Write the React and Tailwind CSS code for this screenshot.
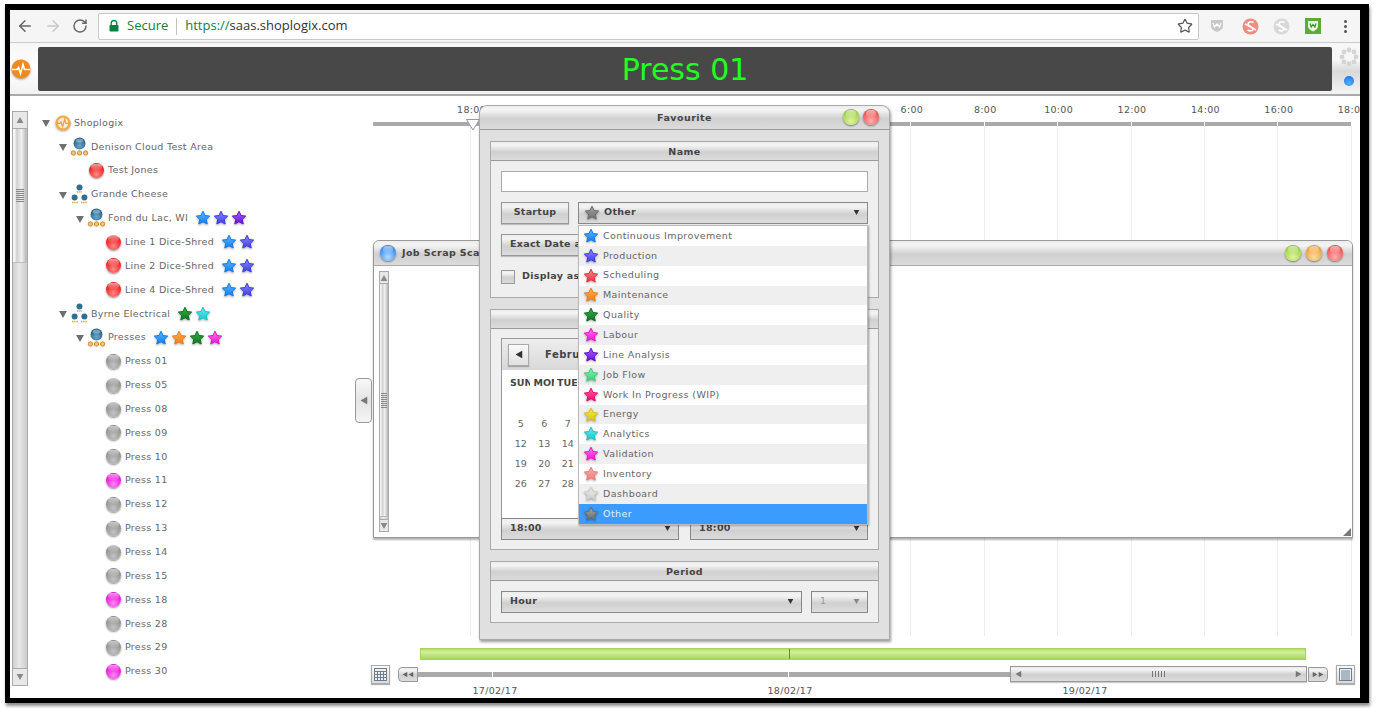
import React, { useId } from 'react';
import { ArrowLeft, ArrowRight, RotateCw, Star as StarOutline } from 'lucide-react';

const GLOSS = 'bg-[linear-gradient(180deg,#ececec_0%,#f4f4f4_18%,#d0d0d0_55%,#dcdcdc_100%)]';
const FONT = "font-['DejaVu_Sans',sans-serif]";

const STAR_COLORS = {
  blue: ['#62b8ff', '#0f7cf0'],
  indigo: ['#8c8cff', '#3c3ce6'],
  red: ['#ff8a92', '#ee3040'],
  orange: ['#ffb866', '#f57a0a'],
  green: ['#3fae4e', '#0f7322'],
  magenta: ['#ff7cf0', '#f010d0'],
  purple: ['#a866ff', '#6610d8'],
  mint: ['#90f0b8', '#34d078'],
  pink: ['#ff66a8', '#f00a70'],
  yellow: ['#f5ec66', '#d6c40a'],
  teal: ['#70ecec', '#10c8cc'],
  salmon: ['#ffb0b0', '#f47a7a'],
  silver: ['#eeeeee', '#cccccc'],
  gray: ['#a8a8a8', '#6c6c6c'],
};

const Star = ({ color, size = 16 }) => {
  const id = useId();
  const [top, bottom] = STAR_COLORS[color];
  return (
    <svg width={size} height={size} viewBox="0 0 16 16" className="shrink-0 drop-shadow-[0_1px_1px_rgba(0,0,0,0.35)]">
      <defs>
        <linearGradient id={id} x1="0" y1="0" x2="0" y2="1">
          <stop offset="0" stopColor={top} />
          <stop offset="1" stopColor={bottom} />
        </linearGradient>
      </defs>
      <path
        d="M8 1.200l2 4.300 4.700.6-3.400 3.200.9 4.700L8 11.700l-4.200 2.300.9-4.700L1.300 6.100 6 5.500z"
        fill={`url(#${id})`}
        stroke={bottom}
        strokeWidth="1"
        strokeLinejoin="round"
      />
    </svg>
  );
};

const ORBS = {
  red: 'bg-[radial-gradient(circle_at_50%_75%,#ff8a8a_0%,#f42c2c_55%,#c81818_100%)]',
  gray: 'bg-[radial-gradient(circle_at_50%_75%,#c4c4c4_0%,#999999_55%,#777777_100%)]',
  magenta: 'bg-[radial-gradient(circle_at_50%_75%,#ff8af4_0%,#f422e0_55%,#c010b0_100%)]',
  blue: 'bg-[radial-gradient(circle_at_50%_75%,#b8dcff_0%,#4f9cf0_55%,#1c66c0_100%)]',
  lime: 'bg-[radial-gradient(circle_at_50%_75%,#e0f5a0_0%,#a8d850_60%,#7aa828_100%)]',
  amber: 'bg-[radial-gradient(circle_at_50%_75%,#ffdca0_0%,#f0a848_60%,#c88020_100%)]',
  rose: 'bg-[radial-gradient(circle_at_50%_75%,#ffb0b0_0%,#f06060_60%,#c83838_100%)]',
};

const Orb = ({ color, size = 'w-[15px] h-[15px]' }) => (
  <span className={`relative block shrink-0 rounded-full shadow-[0_1px_2px_rgba(0,0,0,0.45)] ${size} ${ORBS[color]}`}>
    <span className="absolute left-[16%] right-[16%] top-[5%] h-[42%] rounded-full bg-linear-to-b from-white/55 to-white/5" />
  </span>
);

const NodeIcon = () => (
  <svg width="19" height="20" viewBox="0 0 19 20">
    <defs>
      <radialGradient id="node-orb" cx="50%" cy="70%" r="65%">
        <stop offset="0" stopColor="#6aa8c8" />
        <stop offset="1" stopColor="#1f5f86" />
      </radialGradient>
    </defs>
    <circle cx="9.5" cy="6.5" r="6" fill="url(#node-orb)" />
    <ellipse cx="9.5" cy="3.6" rx="3.6" ry="2" fill="#fff" fillOpacity="0.35" />
    <circle cx="3.4" cy="16" r="2.2" fill="#f3c27c" stroke="#d98a24" strokeWidth="1" />
    <circle cx="9.5" cy="16" r="2.2" fill="#f3c27c" stroke="#d98a24" strokeWidth="1" />
    <circle cx="15.6" cy="16" r="2.2" fill="#f3c27c" stroke="#d98a24" strokeWidth="1" />
  </svg>
);

const OrgIcon = () => (
  <svg width="19" height="21" viewBox="0 0 19 21">
    <circle cx="9.5" cy="3.4" r="3" fill="#2f6f96" />
    <path d="M7 8h5M2 18.500h6M11 18.500h6" stroke="#e89a3c" strokeWidth="1.6" strokeDasharray="1.4 .8" />
    <circle cx="4.6" cy="13.500" r="3" fill="#2f6f96" />
    <circle cx="14.4" cy="13.500" r="3" fill="#2f6f96" />
  </svg>
);

const LogoIcon = ({ size = 16, ring = false }) => (
  <svg width={size} height={size} viewBox="0 0 20 20" className="drop-shadow-[0_1px_1px_rgba(0,0,0,0.35)]">
    <circle cx="10" cy="10" r="9.5" fill={ring ? '#f6a94e' : '#f08a1c'} />
    {ring && <circle cx="10" cy="10" r="6.5" fill="#fdeeda" />}
    <path d="M1 10.500h5l1.500-2 2 6 2.500-9 1.500 5h6" fill="none" stroke={ring ? '#f0a040' : '#fff'} strokeWidth="1.6" />
  </svg>
);

const Caret = ({ className = 'text-[#6f6f6f]', w = 9, h = 8 }) => (
  <svg width={w} height={h} viewBox="0 0 9 8" className={`shrink-0 ${className}`}>
    <path d="M0 0h9L4.500 8z" fill="currentColor" />
  </svg>
);

const TREE = [
  { level: 0, label: 'Shoplogix', icon: 'logo', open: true },
  { level: 1, label: 'Denison Cloud Test Area', icon: 'node', open: true },
  { level: 2, label: 'Test Jones', orb: 'red' },
  { level: 1, label: 'Grande Cheese', icon: 'org', open: true },
  { level: 2, label: 'Fond du Lac, WI', icon: 'node', open: true, stars: ['blue', 'indigo', 'purple'] },
  { level: 3, label: 'Line 1 Dice-Shred', orb: 'red', stars: ['blue', 'indigo'] },
  { level: 3, label: 'Line 2 Dice-Shred', orb: 'red', stars: ['blue', 'indigo'] },
  { level: 3, label: 'Line 4 Dice-Shred', orb: 'red', stars: ['blue', 'indigo'] },
  { level: 1, label: 'Byrne Electrical', icon: 'org', open: true, stars: ['green', 'teal'] },
  { level: 2, label: 'Presses', icon: 'node', open: true, stars: ['blue', 'orange', 'green', 'magenta'] },
  { level: 3, label: 'Press 01', orb: 'gray' },
  { level: 3, label: 'Press 05', orb: 'gray' },
  { level: 3, label: 'Press 08', orb: 'gray' },
  { level: 3, label: 'Press 09', orb: 'gray' },
  { level: 3, label: 'Press 10', orb: 'gray' },
  { level: 3, label: 'Press 11', orb: 'magenta' },
  { level: 3, label: 'Press 12', orb: 'gray' },
  { level: 3, label: 'Press 13', orb: 'gray' },
  { level: 3, label: 'Press 14', orb: 'gray' },
  { level: 3, label: 'Press 15', orb: 'gray' },
  { level: 3, label: 'Press 18', orb: 'magenta' },
  { level: 3, label: 'Press 28', orb: 'gray' },
  { level: 3, label: 'Press 29', orb: 'gray' },
  { level: 3, label: 'Press 30', orb: 'magenta' },
];

const FAVOURITES = [
  ['Continuous Improvement', 'blue'],
  ['Production', 'indigo'],
  ['Scheduling', 'red'],
  ['Maintenance', 'orange'],
  ['Quality', 'green'],
  ['Labour', 'magenta'],
  ['Line Analysis', 'purple'],
  ['Job Flow', 'mint'],
  ['Work In Progress (WIP)', 'pink'],
  ['Energy', 'yellow'],
  ['Analytics', 'teal'],
  ['Validation', 'magenta'],
  ['Inventory', 'salmon'],
  ['Dashboard', 'silver'],
];

const HOURS = ['18:00', '20:00', '22:00', '0:00', '2:00', '4:00', '6:00', '8:00', '10:00', '12:00', '14:00', '16:00', '18:00'];

const TreeRow = ({ level, label, icon, orb, open, stars }) => {
  const indent = ['pl-0', 'pl-[17px]', 'pl-[34px]', 'pl-[51px]'][level];
  return (
    <div className={`flex h-[23.85px] items-center ${indent}`}>
      <span className="flex w-[11px] shrink-0 justify-start pt-[2px]">{open && <Caret w={8} h={7} />}</span>
      <span className="flex w-[19px] shrink-0 justify-center">
        {icon === 'logo' && <LogoIcon ring />}
        {icon === 'node' && <NodeIcon />}
        {icon === 'org' && <OrgIcon />}
        {orb && <Orb color={orb} />}
      </span>
      <span className="ml-[2px] whitespace-nowrap text-[9.5px] tracking-[0.3px] text-[#666]">{label}</span>
      {stars && (
        <span className="ml-[7px] flex gap-[2px]">
          {stars.map((s, i) => (
            <Star key={i} color={s} />
          ))}
        </span>
      )}
    </div>
  );
};

const VScroll = ({ thumb, grip, width, arrow }) => (
  <div className={`flex h-full shrink-0 flex-col border border-[#aaa] bg-[linear-gradient(90deg,#d0d0d0,#e8e8e8_45%,#cccccc)] ${width}`}>
    <div className={`flex shrink-0 items-center justify-center border-b border-[#aaa] bg-[#e8e8e8] ${arrow}`}>
      <Caret className="rotate-180 text-[#888]" w={8} h={6} />
    </div>
    <div className={`flex shrink-0 items-center justify-center border-b border-[#bbb] bg-[linear-gradient(90deg,#f4f4f4_12%,#cfcfcf_28%,#f2f2f2_60%,#bdbdbd_92%)] ${thumb}`}>
      <span className={`block bg-[repeating-linear-gradient(180deg,#888_0,#888_1px,transparent_1px,transparent_2px)] ${grip}`} />
    </div>
    <div className="flex-1" />
    <div className={`flex shrink-0 items-center justify-center border-t border-[#aaa] bg-[#e8e8e8] ${arrow}`}>
      <Caret className="text-[#888]" w={8} h={6} />
    </div>
  </div>
);

const Btn = ({ children, className = '' }) => (
  <div className={`flex h-[22px] items-center whitespace-nowrap border border-[#999] pb-[1px] text-[9.5px] font-bold tracking-[0.3px] text-[#444] shadow-[0_1px_1px_rgba(0,0,0,0.2)] ${GLOSS} ${className}`}>
    {children}
  </div>
);

const Select = ({ children, className = '', pad = 'pl-[8px]', muted = false }) => (
  <div className={`flex h-[22px] items-center justify-between border border-[#888] pb-[1px] pr-[7px] text-[9.5px] font-bold tracking-[0.3px] text-[#444] ${pad} ${GLOSS} ${className}`}>
    <span className={`flex items-center gap-[4px] ${muted ? 'font-normal text-[#999]' : ''}`}>{children}</span>
    <Caret className={muted ? 'text-[#888]' : 'text-[#333]'} w={7} h={5} />
  </div>
);

const PanelHead = ({ children }) => (
  <div className={`flex h-[19px] shrink-0 items-center justify-center border-b border-[#999] pt-[2px] text-[9.5px] font-bold tracking-[0.4px] text-[#444] ${GLOSS}`}>
    {children}
  </div>
);

const Calendar = () => {
  const days = ['', '', '', 1, 2, 3, 4, 5, 6, 7, 8, 9, 10, 11, 12, 13, 14, 15, 16, 17, 18, 19, 20, 21, 22, 23, 24, 25, 26, 27, 28];
  return (
    <div className="border border-b-0 border-[#999] bg-white">
      <div className="flex h-[31px] items-center bg-[linear-gradient(180deg,#eeeeee,#d8d8d8)] px-[6px]">
        <div className="flex h-[22px] w-[21px] items-center justify-center border border-[#aaa] bg-[linear-gradient(180deg,#fafafa,#e0e0e0)] shadow-[0_1px_1px_rgba(0,0,0,0.25)]">
          <Caret className="rotate-90 text-[#333]" w={8} h={7} />
        </div>
        <span className="ml-[16px] text-[10px] font-bold tracking-[0.5px] text-[#444]">February 2017</span>
      </div>
      <div className="h-[148px] px-[7px] pt-[3px]">
        <div className="grid h-[20px] grid-cols-[repeat(7,23.5px)] items-center text-[9.5px] font-bold text-[#444]">
          {['SUN', 'MON', 'TUE', 'WED', 'THU', 'FRI', 'SAT'].map((d) => (
            <span key={d} className="ml-[1px] w-[20px] overflow-hidden">{d}</span>
          ))}
        </div>
        <div className="mt-[1px] grid grid-cols-[repeat(7,23.5px)] text-center text-[9.5px] leading-[20px] text-[#666]">
          {days.map((d, i) => (
            <span key={i} className="h-[20px]">{d}</span>
          ))}
        </div>
      </div>
    </div>
  );
};

const FavouriteDialog = () => (
  <div className="absolute left-[119px] top-[9px] z-20 flex h-[535px] w-[411px] flex-col rounded-t-[8px] border border-[#aaa] bg-[#e0e0e0] shadow-[1px_2px_3px_rgba(0,0,0,0.4)]">
    <div className={`relative flex h-[24px] shrink-0 items-center justify-center rounded-t-[8px] border-b border-[#999] pt-[2px] text-[9.5px] font-bold tracking-[0.45px] text-[#444] ${GLOSS}`}>
      Favourite
      <span className="absolute right-[10px] top-[3px] flex gap-[4px]">
        <Orb color="lime" size="w-[16px] h-[16px]" />
        <Orb color="rose" size="w-[16px] h-[16px]" />
      </span>
    </div>
    <div className="flex flex-col gap-[11px] px-[10px] pt-[11px]">
      <section className="flex h-[157px] flex-col border border-[#aaa] bg-[#efefef]">
        <PanelHead>Name</PanelHead>
        <div className="flex flex-col gap-[10px] px-[10px] pt-[10px]">
          <div className="h-[21px] border border-[#aaa] bg-white" />
          <div className="flex gap-[9px]">
            <Btn className="w-[68px] justify-center">Startup</Btn>
            <Select className="flex-1" pad="pl-[5px]">
              <Star color="gray" />
              Other
            </Select>
          </div>
          <Btn className="w-[130px] overflow-hidden pl-[8px]">Exact Date and Time</Btn>
          <div className="mt-[3px] flex items-center gap-[7px] text-[9.5px] font-bold tracking-[0.3px] text-[#444]">
            <span className={`h-[14px] w-[14px] border border-[#999] ${GLOSS}`} />
            <span className="pb-[1px]">Display as</span>
          </div>
        </div>
      </section>

      <section className="flex h-[241px] flex-col border border-[#aaa] bg-[#efefef]">
        <PanelHead />
        <div className="px-[10px] pt-[9px]">
          <Calendar />
          <div className="flex gap-[11px]">
            <Select className="w-[178px]">18:00</Select>
            <Select className="flex-1">18:00</Select>
          </div>
        </div>
      </section>

      <section className="flex h-[62px] flex-col border border-[#aaa] bg-[#efefef]">
        <PanelHead>Period</PanelHead>
        <div className="flex gap-[9px] px-[10px] pt-[10px]">
          <Select className="w-[301px]">Hour</Select>
          <Select className="flex-1" muted>1</Select>
        </div>
      </section>
    </div>

    <div className="absolute left-[98px] top-[119px] w-[290px] border border-[#bbb] bg-white shadow-[1px_1px_2px_rgba(0,0,0,0.35)]">
      {FAVOURITES.map(([label, color], i) => (
        <div key={label} className={`flex h-[19.85px] items-center gap-[4px] pl-[4px] text-[9.5px] tracking-[0.4px] text-[#666] ${i % 2 ? 'bg-[#efefef]' : 'bg-white'}`}>
          <Star color={color} />
          {label}
        </div>
      ))}
      <div className="flex h-[19.85px] items-center gap-[4px] bg-[#3b9bff] pl-[4px] text-[9.5px] tracking-[0.4px] text-[#e6f2ff]">
        <Star color="gray" />
        Other
      </div>
    </div>
  </div>
);

const ScrapWindow = () => (
  <div className="absolute left-0 top-[114px] flex h-[298px] w-[980px] flex-col rounded-t-[6px] border border-[#999] bg-white shadow-[0_2px_2px_rgba(0,0,0,0.3)]">
    <div className={`flex h-[25px] shrink-0 items-center justify-between rounded-t-[6px] border-b border-[#aaa] pl-[6px] pr-[9px] ${GLOSS}`}>
      <span className="flex items-center gap-[6px] text-[9.5px] font-bold tracking-[0.4px] text-[#444]">
        <Orb color="blue" size="w-[16px] h-[16px]" />
        Job Scrap Scatter
      </span>
      <span className="flex gap-[5px]">
        <Orb color="lime" size="w-[16px] h-[16px]" />
        <Orb color="amber" size="w-[16px] h-[16px]" />
        <Orb color="rose" size="w-[16px] h-[16px]" />
      </span>
    </div>
    <div className="relative flex-1 py-[5px] pl-[5px]">
      <VScroll width="w-[10px]" thumb="h-[233px]" grip="h-[15px] w-[6px]" arrow="h-[12px]" />
      <svg width="8" height="8" viewBox="0 0 8 8" className="absolute bottom-[1px] right-[1px]">
        <path d="M8 0v8H0z" fill="#777" />
      </svg>
    </div>
  </div>
);

const ToolIcon = ({ kind }) => (
  <div className="flex h-[19px] w-[19px] shrink-0 items-center justify-center border border-[#aaa] bg-[linear-gradient(180deg,#fafafa,#dcdcdc)] shadow-[0_1px_1px_rgba(0,0,0,0.3)]">
    <svg width="13" height="13" viewBox="0 0 13 13" fill="none" stroke="#6b7c8c" strokeWidth="1">
      <rect x="0.5" y="0.5" width="12" height="12" fill="#eef2f6" />
      {kind === 'grid' ? (
        <path d="M0 3.500h13M0 6.500h13M0 9.500h13M3.500 3v10M6.500 3v10M9.500 3v10" />
      ) : (
        <path d="M2 3h9M2 5h9M2 7h9M2 9h9M2 11h9" />
      )}
    </svg>
  </div>
);

const Toolbar = () => (
  <div className="flex h-[33px] shrink-0 items-center border-b border-[#cccccc] bg-[#f5f5f5]">
    <div className="flex w-[88px] items-center gap-[10px] pl-[6px]">
      <ArrowLeft size={18} strokeWidth={2} className="text-[#666]" />
      <ArrowRight size={18} strokeWidth={2} className="text-[#c8c8c8]" />
      <RotateCw size={16} strokeWidth={2.2} className="text-[#666]" />
    </div>
    <div className="flex h-[27px] w-[1101px] items-center rounded-[2px] border border-[#c8c8c8] bg-white pl-[10px] pr-[5px] font-['Open_Sans',sans-serif]">
      <svg width="10" height="12" viewBox="0 0 10 12">
        <path d="M2.200 5V3.400a2.800 2.800 0 0 1 5.600 0V5" fill="none" stroke="#0b8043" strokeWidth="1.3" />
        <rect x="0.5" y="5" width="9" height="6.5" rx="0.8" fill="#0b8043" />
      </svg>
      <span className="ml-[8px] text-[13px] text-[#0b8043]">Secure</span>
      <span className="ml-[8px] h-[17px] w-px bg-[#c4c4c4]" />
      <span className="ml-[8px] text-[13px] text-[#333]">
        <span className="text-[#0b8043]">https://</span>saas.shoplogix.com
      </span>
      <StarOutline size={16} strokeWidth={1.8} className="ml-auto text-[#555]" />
    </div>
    <div className="flex flex-1 items-center pl-[10px]">
      <svg width="16" height="16" viewBox="0 0 16 16">
        <path d="M2 2h12v6c0 3-3 5-6 6-3-1-6-3-6-6z" fill="#c8c8c8" />
        <path d="M4 5l1.500 4L8 6l2.500 3L12 5" fill="none" stroke="#fff" strokeWidth="1.3" />
      </svg>
      <svg width="17" height="17" viewBox="0 0 17 17" className="ml-[17px]">
        <circle cx="8.5" cy="8.5" r="8" fill="#f28b82" />
        <path d="M11.500 4.500C9 3 6 4 6 6c0 2.500 5 2.500 5 5 0 2-3 2.500-5.500 1M3 6l11 6" fill="none" stroke="#fff" strokeWidth="1.6" />
      </svg>
      <svg width="17" height="17" viewBox="0 0 17 17" className="ml-[14px]">
        <circle cx="8.5" cy="8.5" r="8" fill="#d8d8d8" />
        <path d="M11.500 4.500C9 3 6 4 6 6c0 2.500 5 2.500 5 5 0 2-3 2.500-5.500 1M3 6l11 6" fill="none" stroke="#fff" strokeWidth="1.6" />
      </svg>
      <svg width="16" height="16" viewBox="0 0 16 16" className="ml-[15px]">
        <rect width="16" height="16" fill="#5cab32" />
        <path d="M3 3h10v5c0 3-3 4.500-5 5.500C6 12.500 3 11 3 8z" fill="#e8f5e0" />
        <path d="M5 5.500l1.200 3.500L8 6.500 9.800 9 11 5.500" fill="none" stroke="#3c8a22" strokeWidth="1.200" />
      </svg>
      <span className="ml-[23px] flex flex-col gap-[2px]">
        <span className="h-[3px] w-[3px] rounded-full bg-[#555]" />
        <span className="h-[3px] w-[3px] rounded-full bg-[#555]" />
        <span className="h-[3px] w-[3px] rounded-full bg-[#555]" />
      </span>
    </div>
  </div>
);

const AppHeader = () => (
  <div className="flex h-[53px] shrink-0 items-stretch border-b-2 border-[#aaaaaa] bg-[linear-gradient(180deg,#f6f6f6,#ffffff_45%,#f2f2f2)] pb-[3px] pt-[4px]">
    <div className="flex w-[28px] shrink-0 items-center pl-[1px]">
      <LogoIcon size={20} />
    </div>
    <div className="flex w-[1294px] items-center justify-center rounded-[2px] bg-[#484848] pt-[2px] text-[30px] leading-none text-[#22ff22]">
      Press 01
    </div>
    <div className="flex flex-1 flex-col items-end justify-between bg-[linear-gradient(180deg,#f6f6f6_30%,#d8d8d8_55%,#f0f0f0)] pb-[5px] pr-[1px]">
      <svg width="20" height="20" viewBox="0 0 20 20" fill="#d4d4d4">
        <circle cx="10" cy="3" r="2.400" />
        <circle cx="15" cy="5" r="2.400" />
        <circle cx="17" cy="10" r="2.400" />
        <circle cx="15" cy="15" r="2.400" />
        <circle cx="10" cy="17" r="2.400" />
        <circle cx="5" cy="15" r="2.400" />
        <circle cx="3" cy="10" r="2.400" />
        <circle cx="5" cy="5" r="2.400" />
      </svg>
      <span className="mr-[5px] h-[10px] w-[10px] rounded-full bg-[radial-gradient(circle_at_50%_70%,#59b0ff,#0a6ee6)]" />
    </div>
  </div>
);

const Timeline = () => (
  <div className="relative w-[1000px] shrink-0">
    <div className="flex h-[19px] items-end overflow-hidden pl-[74.8px] text-[9.5px] leading-[10px] tracking-[0.3px] text-[#555]">
      {HOURS.map((h, i) => (
        <span key={i} className="w-[73.4px] shrink-0 text-center">{h}</span>
      ))}
    </div>
    <div className="ml-[13px] mt-[7px] flex h-[4px] w-[978px] bg-[#aaaaaa]">
      <span className="w-[98px] shrink-0 border-r border-white" />
      {HOURS.slice(1).map((h, i) => (
        <span key={i} className="w-[73.4px] shrink-0 border-r border-white" />
      ))}
    </div>
    <div className="relative ml-[13px] flex h-[510px]">
      <span className="w-[98px] shrink-0 border-r border-[#eeeeee]" />
      {HOURS.slice(1).map((h, i) => (
        <span key={i} className="w-[73.4px] shrink-0 border-r border-[#eeeeee]" />
      ))}
      <svg width="14" height="12" viewBox="0 0 14 12" className="absolute left-[93px] top-[-7px]">
        <path d="M0.500 0.500h13L7 11z" fill="#fff" stroke="#999" />
      </svg>
      <ScrapWindow />
    </div>

    <div className="relative ml-[60px] mt-[12px] h-[12px] w-[886px] border border-[#a4d45c] bg-[linear-gradient(180deg,#b4dc6a,#d6f09c_30%,#a8d65c)]">
      <span className="absolute left-[368px] top-0 h-full w-px bg-[#5f9030]" />
    </div>

    <div className="mt-[5px] flex h-[18px] items-center pl-[11px]">
      <ToolIcon kind="grid" />
      <div className={`ml-[8px] flex h-[15px] w-[20px] items-center justify-center rounded-l-[4px] border border-[#999] ${GLOSS}`}>
        <Caret className="rotate-90 text-[#666]" w={6} h={5} />
        <Caret className="rotate-90 text-[#666]" w={6} h={5} />
      </div>
      <div className="flex h-[5px] bg-[#aaaaaa]">
        <span className="w-[75px] border-r border-white" />
        <span className="w-[296px] border-r border-white" />
        <span className="w-[221px]" />
      </div>
      <div className={`flex h-[16px] w-[297px] items-center justify-between border border-[#999] px-[4px] shadow-[0_1px_1px_rgba(0,0,0,0.2)] ${GLOSS}`}>
        <Caret className="rotate-90 text-[#777]" w={7} h={6} />
        <span className="h-[6px] w-[14px] bg-[repeating-linear-gradient(90deg,#777_0,#777_1px,transparent_1px,transparent_3px)]" />
        <Caret className="-rotate-90 text-[#777]" w={7} h={6} />
      </div>
      <div className={`ml-[1px] flex h-[15px] w-[20px] items-center justify-center rounded-r-[4px] border border-[#999] ${GLOSS}`}>
        <Caret className="-rotate-90 text-[#666]" w={6} h={5} />
        <Caret className="-rotate-90 text-[#666]" w={6} h={5} />
      </div>
      <div className="ml-[8px]">
        <ToolIcon kind="list" />
      </div>
    </div>

    <div className="ml-[90px] mt-[2px] flex gap-[205px] text-[9.5px] leading-[12px] tracking-[0.3px] text-[#555]">
      <span className="w-[90px] text-center">17/02/17</span>
      <span className="w-[90px] text-center">18/02/17</span>
      <span className="w-[90px] text-center">19/02/17</span>
    </div>

    <div className="absolute left-[-5px] top-[282px] z-10 flex h-[45px] w-[17px] items-center justify-center rounded-[4px] border border-[#999] bg-[linear-gradient(180deg,#f8f8f8,#e4e4e4_50%,#f4f4f4)]">
      <Caret className="rotate-90 text-[#777]" w={10} h={7} />
    </div>
    <FavouriteDialog />
  </div>
);

export default function App() {
  return (
    <div className={`h-[716px] w-[1378px] overflow-hidden bg-white pl-[5px] pt-[4px] ${FONT}`}>
      <div className="h-[699px] w-[1364px] overflow-hidden border-b-[5px] border-l-[5px] border-r-[9px] border-t-[6px] border-black bg-white shadow-[1px_3px_3px_rgba(0,0,0,0.45)]">
        <Toolbar />
        <AppHeader />
        <div className="flex h-[602px]">
          <aside className="flex w-[350px] shrink-0 pl-[2px] pt-[15px]">
            <div className="h-[575px]">
              <VScroll width="w-[16px]" thumb="h-[134px]" grip="h-[13px] w-[8px]" arrow="h-[17px]" />
            </div>
            <div className="ml-[14px]">
              {TREE.map((row) => (
                <TreeRow key={row.label} {...row} />
              ))}
            </div>
          </aside>
          <Timeline />
        </div>
      </div>
    </div>
  );
}
